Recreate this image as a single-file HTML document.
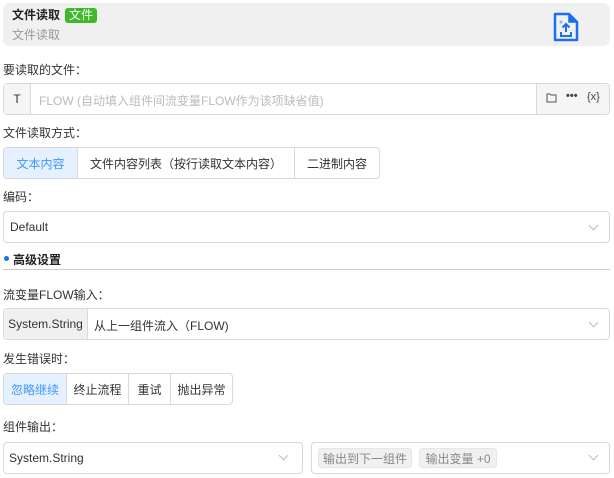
<!DOCTYPE html>
<html><head><meta charset="utf-8"><style>
*{box-sizing:border-box;margin:0;padding:0}
body{width:614px;height:478px;background:#fff;font-family:"Liberation Sans","Noto Sans CJK SC",sans-serif;font-size:12px;color:#333;position:relative;overflow:hidden}
.a{position:absolute}
.lbl{position:absolute;left:3px;font-size:12px;color:#333}
.box{position:absolute;border:1px solid #d9d9d9;border-radius:4px;background:#fff}
.chev{position:absolute;width:7px;height:7px;border-right:1px solid #bbb;border-bottom:1px solid #bbb;transform:rotate(45deg)}
.seg{position:absolute;display:flex;border:1px solid #d9d9d9;border-radius:4px;overflow:hidden}
.seg div{border-left:1px solid #d9d9d9;display:flex;align-items:center;justify-content:center;font-size:12px;color:#333}
.seg div:first-child{border-left:none;background:#e6f1ff;color:#4096ff}
.tag{position:absolute;background:#f0f0f0;border:1px solid #e6e6e6;border-radius:3px;color:#888;font-size:12px;display:flex;align-items:center;justify-content:center}
</style></head><body>
<div class="a" style="left:3px;top:3px;width:607px;height:43px;background:#f0f0f0;border-radius:7px"></div>
<div class="a" style="left:12px;top:8px;font-weight:bold;font-size:12px;color:#222;line-height:15px">文件读取</div>
<div class="a" style="left:65px;top:8px;width:32px;height:15px;background:#3fb82a;color:#fff;border-radius:3px;font-size:12px;line-height:15px;text-align:center">文件</div>
<div class="a" style="left:12px;top:28px;color:#999;font-size:12px;line-height:15px">文件读取</div>
<svg class="a" style="left:552px;top:12px" width="28" height="31" viewBox="0 0 28 31"><path d="M3 2h14l8 8v18H3z" fill="none" stroke="#1a6ff5" stroke-width="2.5" stroke-linejoin="round"/><path d="M17 2v8h8" fill="#1a6ff5" stroke="#1a6ff5" stroke-width="1.5"/><circle cx="9" cy="10" r="1.5" fill="#8ab4f8"/><path d="M14 12v8M10.5 15.5L14 12l3.5 3.5M9 20v4h10v-4" fill="none" stroke="#1a6ff5" stroke-width="2"/></svg>

<div class="lbl" style="top:61px">要读取的文件：</div>
<div class="box" style="left:3px;top:83px;width:607px;height:32px"></div>
<div class="a" style="left:4px;top:84px;width:27px;height:30px;background:#f5f5f5;border-right:1px solid #d9d9d9;text-align:center;line-height:30px;color:#333">T</div>
<div class="a" style="left:39px;top:92px;color:#bbb">FLOW (自动填入组件间流变量FLOW作为该项缺省值)</div>
<div class="a" style="left:536px;top:84px;width:73px;height:30px;background:#f5f5f5;border-left:1px solid #d9d9d9;border-radius:0 4px 4px 0"></div>
<svg class="a" style="left:546px;top:93px" width="11" height="10" viewBox="0 0 11 10"><path d="M1 1h3l1 1h5v7H1z" fill="none" stroke="#555"/></svg>
<div class="a" style="left:566px;top:90px;font-size:11px;font-weight:bold;color:#444">•••</div>
<div class="a" style="left:587px;top:91px;font-size:11px;color:#444">{x}</div>

<div class="lbl" style="top:124px">文件读取方式：</div>
<div class="seg" style="left:3px;top:147px;height:32px"><div style="width:73px">文本内容</div><div style="width:217px">文件内容列表（按行读取文本内容）</div><div style="width:85px">二进制内容</div></div>

<div class="lbl" style="top:188px">编码：</div>
<div class="box" style="left:3px;top:211px;width:607px;height:32px"></div>
<div class="a" style="left:10px;top:220px">Default</div>
<div class="chev" style="left:590px;top:222px"></div>

<div class="a" style="left:4px;top:256px;width:5px;height:5px;border-radius:50%;background:#1a6ff5"></div>
<div class="a" style="left:13px;top:251px;font-weight:bold;color:#222">高级设置</div>
<div class="a" style="left:3px;top:269px;width:607px;height:1px;background:#ccc"></div>

<div class="lbl" style="top:286px">流变量FLOW输入：</div>
<div class="box" style="left:3px;top:308px;width:607px;height:32px"></div>
<div class="a" style="left:4px;top:309px;width:84px;height:30px;background:#f0f0f0;border-right:1px solid #d9d9d9;line-height:30px;text-align:center;border-radius:4px 0 0 4px">System.String</div>
<div class="a" style="left:94px;top:317px">从上一组件流入（FLOW)</div>
<div class="chev" style="left:590px;top:319px"></div>

<div class="lbl" style="top:350px">发生错误时：</div>
<div class="seg" style="left:3px;top:373px;height:32px"><div style="width:62px">忽略继续</div><div style="width:62px">终止流程</div><div style="width:42px">重试</div><div style="width:62px">抛出异常</div></div>

<div class="lbl" style="top:418px">组件输出：</div>
<div class="box" style="left:3px;top:442px;width:300px;height:32px"></div>
<div class="a" style="left:9px;top:451px">System.String</div>
<div class="chev" style="left:280px;top:452px"></div>
<div class="box" style="left:311px;top:442px;width:299px;height:32px"></div>
<div class="tag" style="left:318px;top:448px;width:94px;height:20px">输出到下一组件</div>
<div class="tag" style="left:419px;top:448px;width:78px;height:20px">输出变量 +0</div>
<div class="chev" style="left:590px;top:452px"></div>
</body></html>
